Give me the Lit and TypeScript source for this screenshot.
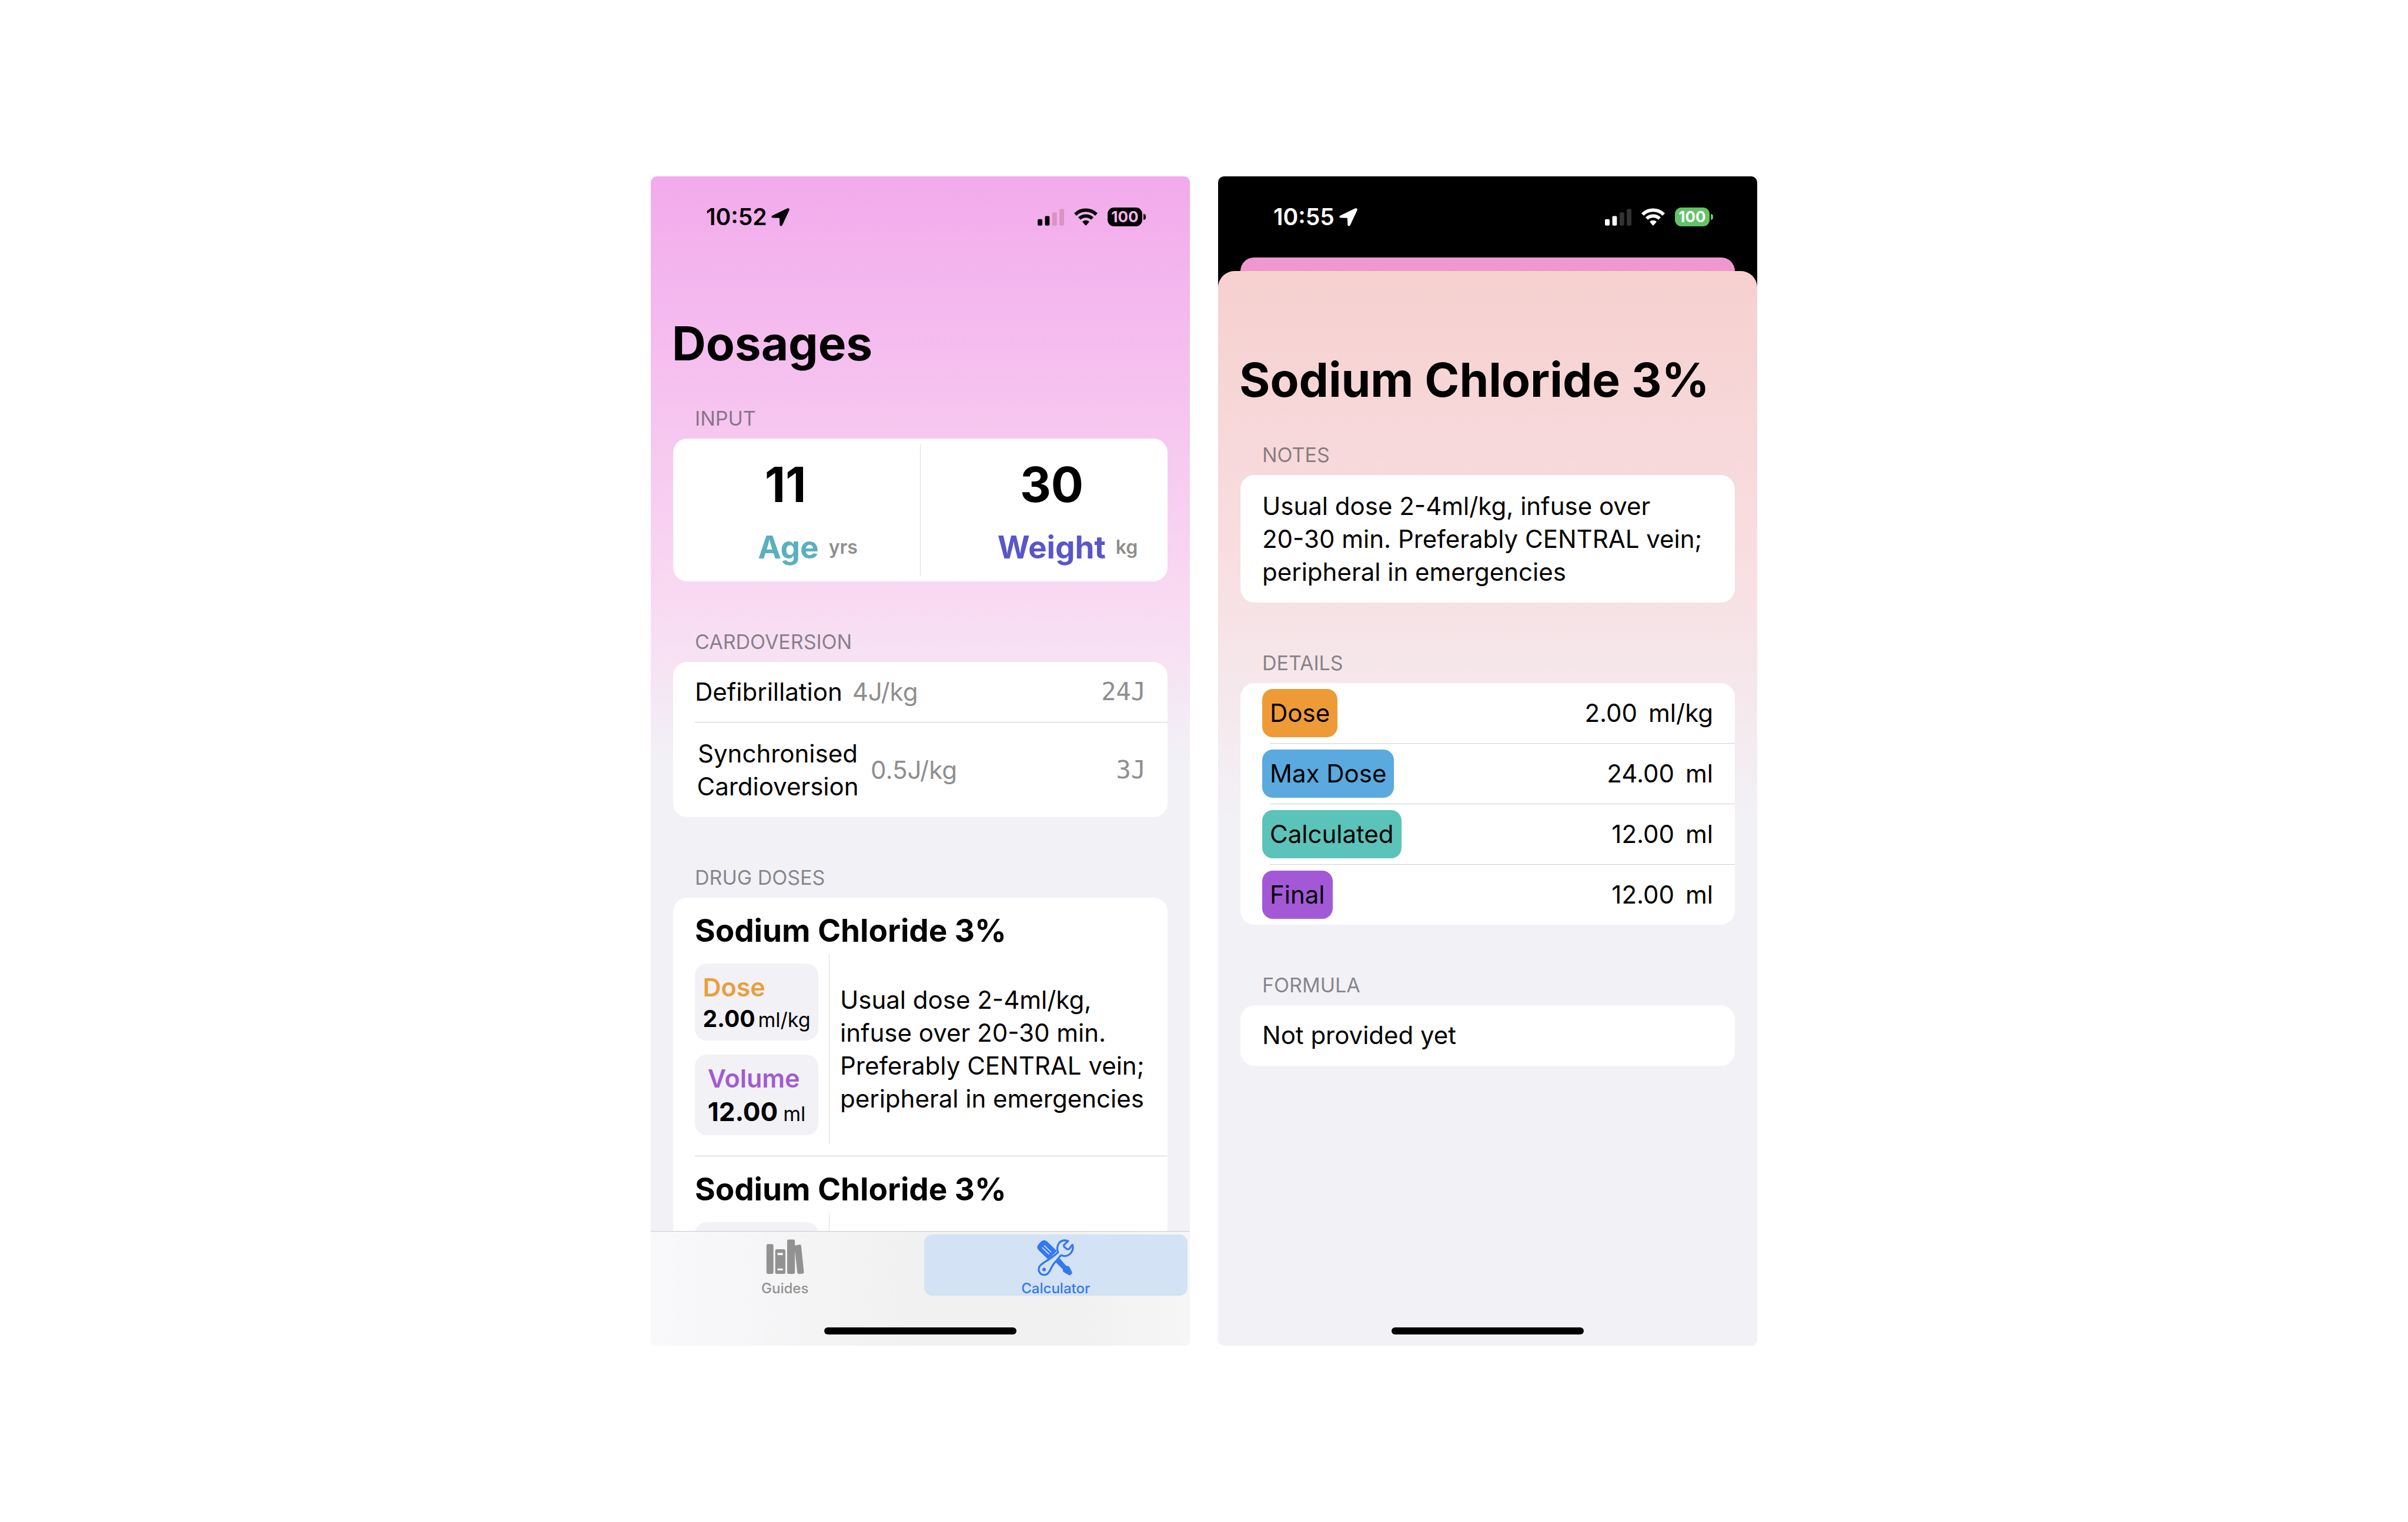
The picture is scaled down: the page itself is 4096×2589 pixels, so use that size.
import { LitElement, html, css, svg, nothing } from "lit";
import { customElement, property } from "lit/decorators.js";

interface Energy {
  name: string;
  rate: string;
  value: string;
  stacked?: boolean;
}

interface Detail {
  label: string;
  amount: string;
  unit: string;
  tone: string;
}

const ENERGIES: Energy[] = [
  { name: "Defibrillation", rate: "4J/kg", value: "24J" },
  { name: "Synchronised Cardioversion", rate: "0.5J/kg", value: "3J", stacked: true },
];

const DRUGS = ["Sodium Chloride 3%", "Sodium Chloride 3%"];

const DETAILS: Detail[] = [
  { label: "Dose", amount: "2.00", unit: "ml/kg", tone: "orange" },
  { label: "Max Dose", amount: "24.00", unit: "ml", tone: "blue" },
  { label: "Calculated", amount: "12.00", unit: "ml", tone: "teal" },
  { label: "Final", amount: "12.00", unit: "ml", tone: "purple" },
];

const note = html`Usual dose 2-4ml/kg, infuse over <span class="keep">20-30</span> min.
  Preferably CENTRAL vein; peripheral in emergencies`;

const shared = css`
  * {
    box-sizing: border-box;
  }
  h1,
  h2,
  h3,
  p,
  dl,
  dd,
  dt {
    margin: 0;
    font-weight: 400;
  }
  h1 {
    margin-left: -2px;
    font-size: 80px;
    line-height: 96px;
    font-weight: 700;
  }
  .section {
    margin-top: 83px;
  }
  .section.first {
    margin-top: 60px;
  }
  .section > h2 {
    padding: 0 37px 14px;
    font-size: 34px;
    line-height: 40px;
    color: rgba(60, 60, 67, 0.6);
  }
  .card {
    background: #fff;
    border-radius: 24px;
    font-size: 42px;
    line-height: 56px;
  }
  .sep {
    height: 1px;
    margin-left: 37px;
    background: #d0d0d3;
  }
  .keep {
    white-space: nowrap;
  }
  .home {
    width: 327px;
    height: 12px;
    border-radius: 6px;
    background: #000;
    align-self: center;
  }
`;

@customElement("status-bar")
export class StatusBar extends LitElement {
  @property() time = "";

  static styles = css`
    :host {
      display: flex;
      align-items: center;
      height: 138px;
      flex: none;
      padding: 0 75px 0 94px;
      color: var(--status-ink, #000);
    }
    .time {
      font-size: 39px;
      line-height: 48px;
      font-weight: 600;
    }
    svg {
      display: block;
      fill: currentColor;
    }
    .arrow {
      width: 31px;
      height: 31px;
      margin: 0 auto 0 8px;
    }
    .signal {
      width: 45px;
      height: 29px;
    }
    .dim {
      fill: var(--status-dim, #da91c4);
    }
    .wifi {
      width: 40px;
      height: 30px;
      margin: 0 17px;
    }
    .arc {
      fill: none;
      stroke: currentColor;
      stroke-width: 30;
    }
    .battery {
      width: 59px;
      height: 32px;
      border-radius: 11px;
      background: var(--battery, #000);
      color: var(--battery-ink, #f4b2ee);
      font-size: 26px;
      line-height: 32px;
      font-weight: 700;
      text-align: center;
    }
    .nub {
      width: 4px;
      height: 10px;
      margin-left: 2px;
      border-radius: 0 4px 4px 0;
      background: var(--battery, #000);
    }
  `;

  render() {
    return html`
      <span class="time">${this.time}</span>
      <svg class="arrow" viewBox="727 110 162 162" aria-hidden="true">
        <path
          d="M736 177 L868 113 Q893 105 886 130 L825 261 Q813 279 802 261 L800 204 Q800 198 794 198 L740 196 Q719 189 736 177Z"
        />
      </svg>
      <svg class="signal" viewBox="263 172 237 150" aria-hidden="true">
        <rect x="263" y="264" width="42" height="58" rx="11" />
        <rect x="329" y="236" width="41" height="86" rx="11" />
        <rect class="dim" x="394" y="204" width="41" height="118" rx="11" />
        <rect class="dim" x="459" y="172" width="41" height="150" rx="11" />
      </svg>
      <svg class="wifi" viewBox="588 168 208 156" aria-hidden="true">
        <path class="arc" d="M598.7 224.7A132 132 0 0 1 785.3 224.7" />
        <path class="arc" d="M634.7 260.7A81 81 0 0 1 749.3 260.7" />
        <path d="M661 289A44 44 0 0 1 723 289L696 320Q692 324 688 320Z" />
      </svg>
      <span class="battery">100</span><span class="nub"></span>
    `;
  }
}

@customElement("dosages-screen")
export class DosagesScreen extends LitElement {
  static styles = [
    shared,
    css`
      :host {
        display: flex;
        flex-direction: column;
        overflow: hidden;
        border-radius: 10px;
        background: linear-gradient(#f2aaec 0%, #f9d9f2 36%, #f2f1f6 50%);
      }
      main {
        flex: 1 1 0;
        min-height: 0;
        overflow: hidden;
        padding: 98px 38px 0;
      }
      .inputs {
        display: grid;
        grid-template-columns: 1fr 1px 1fr;
        padding: 10px 0;
      }
      .rule {
        background: #dcdcdf;
      }
      .cell {
        display: flex;
        flex-direction: column;
        gap: 26px;
        padding: 21px 0 16px;
      }
      input {
        width: 100%;
        height: 96px;
        padding: 0 38px 0 0;
        border: 0;
        outline: 0;
        background: none;
        color: #000;
        font: 700 82px/96px Inter, sans-serif;
        text-align: center;
      }
      label {
        display: flex;
        justify-content: center;
        align-items: center;
        gap: 17px;
        padding-left: 38px;
        font-size: 53px;
        line-height: 64px;
        font-weight: 700;
        color: #5aafc1;
      }
      .weight input {
        padding: 0 0 0 26px;
      }
      .weight label {
        padding-left: 80px;
        color: #5856c9;
      }
      label small {
        font-size: 32px;
        font-weight: 600;
        color: #8e8e8e;
      }
      .row {
        display: flex;
        align-items: center;
        gap: 17px;
        padding: 23px 37px;
      }
      .row.stacked {
        padding: 25px 37px 24px;
      }
      .stacked .name {
        width: 282px;
        text-align: center;
      }
      .rate,
      .value {
        color: #8e8e8e;
      }
      .value {
        margin-left: auto;
        font-family: "DejaVu Sans Mono", monospace;
      }
      .drug {
        padding: 24px 20px 19px 37px;
      }
      h3 {
        font-size: 53px;
        line-height: 64px;
        font-weight: 700;
      }
      .body {
        display: grid;
        grid-template-columns: 210px 1px 1fr;
        column-gap: 18px;
        align-items: center;
        margin-top: 8px;
      }
      .body .rule {
        align-self: stretch;
      }
      .boxes {
        display: flex;
        flex-direction: column;
        gap: 24px;
        padding: 16px 0;
      }
      .box {
        display: flex;
        justify-content: center;
        padding: 15px 0 14px;
        border-radius: 20px;
        background: #f2f1f6;
      }
      .box dt {
        margin-bottom: 6px;
        font-size: 43px;
        line-height: 50px;
        font-weight: 600;
        color: #e99f3c;
      }
      .box dd {
        display: flex;
        align-items: baseline;
        gap: 5px;
        font-size: 39px;
        line-height: 46px;
        font-weight: 700;
      }
      .box.volume dt {
        color: #a15bd4;
      }
      .box.volume dd {
        gap: 9px;
        font-size: 44px;
        line-height: 52px;
      }
      .box dd span {
        font-size: 34px;
        line-height: 36px;
        font-weight: 400;
      }
      .tabs {
        flex: none;
        display: flex;
        flex-direction: column;
        justify-content: space-between;
        height: 195px;
        padding: 5px 4px 19px;
        border-top: 1px solid #cbcbce;
        background: linear-gradient(90deg, #f9f8fb, #f1f1f1 50%, #f1f1f1 80%, #f6f6f6);
      }
      nav {
        display: grid;
        grid-template-columns: 1fr 1fr;
        gap: 12px;
      }
      button {
        display: flex;
        flex-direction: column;
        align-items: center;
        gap: 8px;
        height: 104px;
        padding: 7px 0 0;
        border: 0;
        border-radius: 14px;
        background: none;
        color: #939292;
        font: 500 24px/24px Inter, sans-serif;
      }
      button.active {
        background: #d3e2f4;
        color: #3379ee;
      }
      button svg {
        display: block;
        width: 65px;
        height: 65px;
        fill: currentColor;
      }
      .slot {
        fill: #f8f8f9;
      }
      .slit {
        stroke: #d3e2f4;
        stroke-width: 9;
        stroke-linecap: round;
      }
      .wrench {
        fill: #d3e2f4;
        stroke: currentColor;
        stroke-width: 17;
        stroke-linejoin: round;
      }
    `,
  ];

  private drug(name: string) {
    return html`
      <article class="drug">
        <h3>${name}</h3>
        <div class="body">
          <div class="boxes">
            <div class="box">
              <dl>
                <dt>Dose</dt>
                <dd>2.00<span>ml/kg</span></dd>
              </dl>
            </div>
            <div class="box volume">
              <dl>
                <dt>Volume</dt>
                <dd>12.00<span>ml</span></dd>
              </dl>
            </div>
          </div>
          <div class="rule"></div>
          <p>${note}</p>
        </div>
      </article>
    `;
  }

  private books = svg`
    <svg viewBox="50 66 340 340" aria-hidden="true">
      <rect x="54" y="114" width="62" height="266" rx="13" />
      <rect x="132" y="160" width="90" height="220" rx="15" />
      <rect x="238" y="74" width="69" height="306" rx="13" />
      <path d="M304 127L348 119Q361 118 363 131L387 364Q388 375 377 377L343 381Q331 381 329 370L304 150Z" />
      <rect class="slot" x="152" y="193" width="48" height="19" rx="3" />
      <rect class="slot" x="152" y="331" width="48" height="18" rx="3" />
    </svg>`;

  private tools = svg`
    <svg viewBox="70 66 340 340" aria-hidden="true">
      <path d="M86 166Q68 142 86 118L110 92Q138 68 166 92L252 176L174 252Z" />
      <path class="slit" d="M141 129L199 185M123 147L181 203" />
      <path d="M242 276L276 240L334 306L354 311Q362 313 366 322L387 364Q390 372 384 378L374 388Q367 394 359 390L314 366Q306 362 306 352L304 338Z" />
      <path class="wrench" d="M352 87Q300 70 270 107Q246 142 262 188Q212 232 176 254Q142 272 118 292Q84 316 92 354Q106 390 142 388Q172 386 190 350Q214 296 244 266L288 214Q340 234 376 194Q404 160 390 120L362 156Q352 164 340 158L320 142Q310 132 316 120Z" />
      <circle cx="138" cy="341" r="16" />
    </svg>`;

  render() {
    return html`
      <status-bar time="10:52"></status-bar>
      <main>
        <h1>Dosages</h1>
        <section class="section first">
          <h2>INPUT</h2>
          <div class="card inputs">
            <div class="cell">
              <input id="age" inputmode="numeric" value="11" />
              <label for="age">Age <small>yrs</small></label>
            </div>
            <div class="rule"></div>
            <div class="cell weight">
              <input id="weight" inputmode="numeric" value="30" />
              <label for="weight">Weight <small>kg</small></label>
            </div>
          </div>
        </section>
        <section class="section">
          <h2>CARDOVERSION</h2>
          <div class="card">
            ${ENERGIES.map(
              (e, i) => html`
                ${i ? html`<div class="sep"></div>` : nothing}
                <div class="row ${e.stacked ? "stacked" : ""}">
                  <span class="name">${e.name}</span>
                  <span class="rate">${e.rate}</span>
                  <span class="value">${e.value}</span>
                </div>
              `
            )}
          </div>
        </section>
        <section class="section">
          <h2>DRUG DOSES</h2>
          <div class="card">
            ${DRUGS.map((d, i) => html`${i ? html`<div class="sep"></div>` : nothing}${this.drug(d)}`)}
          </div>
        </section>
      </main>
      <footer class="tabs">
        <nav>
          <button type="button">${this.books}Guides</button>
          <button type="button" class="active" aria-current="page">${this.tools}Calculator</button>
        </nav>
        <div class="home"></div>
      </footer>
    `;
  }
}

@customElement("drug-screen")
export class DrugScreen extends LitElement {
  static styles = [
    shared,
    css`
      :host {
        display: flex;
        flex-direction: column;
        overflow: hidden;
        border-radius: 10px;
        background: linear-gradient(#000 50%, #f2f1f6 50%);
        --status-ink: #fff;
        --status-dim: #333;
        --battery: #62c466;
        --battery-ink: #fff;
      }
      .behind {
        flex: none;
        height: 23px;
        margin: 0 38px;
        border-radius: 24px 24px 0 0;
        background: #ef97d1;
      }
      main {
        flex: 1;
        display: flex;
        flex-direction: column;
        padding: 137px 38px 19px;
        border-radius: 28px 28px 0 0;
        background: linear-gradient(#f6d0cf 0%, #f8dde0 25%, #f2f1f6 51%);
      }
      .text {
        padding: 25px 37px 24px;
      }
      .line {
        padding: 23px 37px 24px;
      }
      .detail {
        display: flex;
        align-items: center;
        justify-content: space-between;
        padding: 10px 37px;
      }
      .sep {
        margin-left: 50px;
      }
      dt {
        padding: 0 13px;
        border-radius: 18px;
        line-height: 82px;
      }
      dd {
        display: flex;
        gap: 19px;
      }
      .orange {
        background: #ee9b37;
      }
      .blue {
        background: #5aaadf;
      }
      .teal {
        background: #5bc3b9;
      }
      .purple {
        background: #a359d6;
      }
      .home {
        margin-top: auto;
      }
    `,
  ];

  render() {
    return html`
      <status-bar time="10:55"></status-bar>
      <div class="behind"></div>
      <main>
        <h1>Sodium Chloride 3%</h1>
        <section class="section first">
          <h2>NOTES</h2>
          <p class="card text">${note}</p>
        </section>
        <section class="section">
          <h2>DETAILS</h2>
          <dl class="card">
            ${DETAILS.map(
              (d, i) => html`
                ${i ? html`<div class="sep"></div>` : nothing}
                <div class="detail">
                  <dt class=${d.tone}>${d.label}</dt>
                  <dd><span>${d.amount}</span><span>${d.unit}</span></dd>
                </div>
              `
            )}
          </dl>
        </section>
        <section class="section">
          <h2>FORMULA</h2>
          <p class="card line">Not provided yet</p>
        </section>
        <div class="home"></div>
      </main>
    `;
  }
}

@customElement("app-root")
export class AppRoot extends LitElement {
  static styles = css`
    :host {
      box-sizing: border-box;
      display: grid;
      grid-template-columns: minmax(0, 1fr) minmax(0, 1fr);
      grid-template-rows: minmax(0, 1fr);
      gap: 48px;
      max-width: 1882px;
      height: 100vh;
      margin: 0 auto;
      padding: 300px 0;
      background: #fff;
      color: #000;
      font-family: Inter, "Liberation Sans", sans-serif;
    }
  `;

  render() {
    return html`
      <dosages-screen></dosages-screen>
      <drug-screen></drug-screen>
    `;
  }
}
